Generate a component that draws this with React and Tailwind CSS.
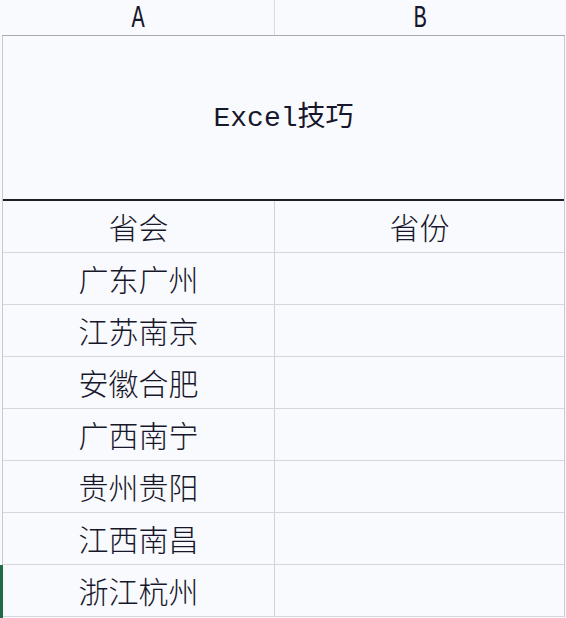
import React from 'react';

const rows = ['广东广州', '江苏南京', '安徽合肥', '广西南宁', '贵州贵阳', '江西南昌', '浙江杭州'];

export default function App() {
    return (
        <div className="w-[566px] h-[618px] bg-[#f9fafd] text-[#17172b] overflow-hidden relative">
            {/* 列标题 */}
            <div className="flex h-[36px] border-b border-[#a9a9b2] ml-[2px] mr-[1px]" style={{ fontFamily: '"Liberation Mono", "Noto Sans CJK SC", monospace' }}>
                <div className="w-[273px] border-r border-[#dadae0] flex items-center justify-center text-[22px]">
                    <span className="inline-block scale-y-[1.4] pt-[2px]">A</span>
                </div>
                <div className="flex-1 flex items-center justify-center text-[22px]">
                    <span className="inline-block scale-y-[1.4] pt-[2px]">B</span>
                </div>
            </div>

            <div className="ml-[2px] mr-[1px] border-l border-r border-[#c9c9d3]">
                {/* 标题行 */}
                <div className="h-[165px] border-b-2 border-[#1e1e26] flex items-center justify-center text-[28px] pt-[3px]" style={{ fontFamily: '"Liberation Mono", "Noto Sans CJK SC", monospace' }}>
                    Excel技巧
                </div>

                {/* 表头 + 数据 */}
                {[['省会', '省份'], ...rows.map((r) => [r, ''])].map(([a, b], i) => (
                    <div key={i} className="flex h-[52px] border-b border-[#d6d6de] text-[30px] font-light" style={{ fontFamily: '"Noto Sans CJK SC", sans-serif' }}>
                        <div className="w-[272px] border-r border-[#d3d3db] flex items-center justify-center">{a}</div>
                        <div className="flex-1 flex items-center justify-center">{b}</div>
                    </div>
                ))}
            </div>

            {/* 选中行标记 */}
            <div className="absolute left-0 top-[565px] w-[3px] h-[53px] bg-[#1f6b45]" />
        </div>
    );
}
